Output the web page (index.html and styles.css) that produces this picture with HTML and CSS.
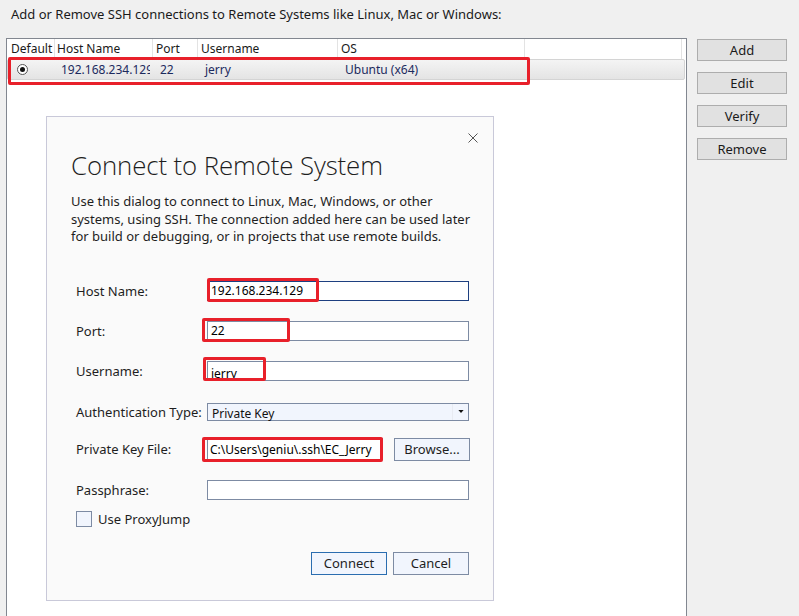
FILE: index.html
```html
<!DOCTYPE html>
<html>
<head>
<meta charset="utf-8">
<link rel="stylesheet" href="styles.css">
</head>
<body>
<div class="intro">Add or Remove SSH connections to Remote Systems like Linux, Mac or Windows:</div>
<div class="workspace">
  <div class="table-panel">
    <div class="thead">
      <div class="th c-default">Default</div>
      <div class="th c-host">Host Name</div>
      <div class="th c-port">Port</div>
      <div class="th c-user">Username</div>
      <div class="th c-os">OS</div>
      <div class="th c-rest"></div>
    </div>
    <div class="trow">
      <div class="td c-default"><span class="radio"><span class="radio-dot"></span></span></div>
      <div class="td c-host"><span class="clip">192.168.234.129</span></div>
      <div class="td c-port">22</div>
      <div class="td c-user">jerry</div>
      <div class="td c-os">Ubuntu (x64)</div>
    </div>
    <div class="mark mark-row"></div>
  </div>
  <div class="side-buttons">
    <button class="side-btn">Add</button>
    <button class="side-btn">Edit</button>
    <button class="side-btn">Verify</button>
    <button class="side-btn">Remove</button>
  </div>
</div>

<div class="dialog">
  <div class="dialog-top">
    <svg class="close" width="10" height="10" viewBox="0 0 10 10"><path d="M0.5 0.5 L9.5 9.5 M9.5 0.5 L0.5 9.5" stroke="#555" stroke-width="1" fill="none"/></svg>
  </div>
  <h1 class="title">Connect to Remote System</h1>
  <p class="desc">Use this dialog to connect to Linux, Mac, Windows, or other systems, using SSH. The connection added here can be used later for build or debugging, or in projects that use remote builds.</p>

  <div class="form">
    <div class="frow r-host">
      <label class="lbl">Host Name:</label>
      <div class="field">
        <div class="input focused">192.168.234.129</div>
        <div class="mark mark-host"></div>
      </div>
    </div>
    <div class="frow r-port">
      <label class="lbl">Port:</label>
      <div class="field">
        <div class="input">22</div>
        <div class="mark mark-port"></div>
      </div>
    </div>
    <div class="frow r-user">
      <label class="lbl">Username:</label>
      <div class="field">
        <div class="input low">jerry</div>
        <div class="mark mark-user"></div>
      </div>
    </div>
    <div class="frow r-auth">
      <label class="lbl">Authentication Type:</label>
      <div class="field">
        <div class="select"><span class="sel-text">Private Key</span><span class="sel-arrow"><svg width="7" height="4" viewBox="0 0 7 4"><path d="M0 0 H7 L3.5 4 Z" fill="#111"/></svg></span></div>
      </div>
    </div>
    <div class="frow r-key">
      <label class="lbl">Private Key File:</label>
      <div class="field field-key">
        <div class="input key">C:\Users\geniu\.ssh\EC_Jerry</div>
        <div class="mark mark-key"></div>
      </div>
      <button class="dbtn browse">Browse...</button>
    </div>
    <div class="frow r-pass">
      <label class="lbl">Passphrase:</label>
      <div class="field">
        <div class="input"></div>
      </div>
    </div>
    <div class="frow r-check">
      <span class="checkbox"></span>
      <span class="check-label">Use ProxyJump</span>
    </div>
    <div class="actions">
      <button class="dbtn primary">Connect</button>
      <button class="dbtn">Cancel</button>
    </div>
  </div>
</div>
</body>
</html>
```

FILE: styles.css
```css
html, body {
  margin: 0;
  padding: 0;
  width: 799px;
  height: 616px;
  overflow: hidden;
  background: #f0f0f0;
  font-family: "Noto Sans", "Liberation Sans", sans-serif;
  color: #1a1a1a;
}

body { position: relative; }

.intro {
  padding: 5px 0 0 11px;
  height: 38px;
  box-sizing: border-box;
  font-size: 13px;
  line-height: 18px;
  color: #1a1a1a;
}

.workspace {
  display: flex;
  align-items: flex-start;
  padding-left: 6px;
}

.table-panel {
  position: relative;
  width: 681px;
  height: 600px;
  box-sizing: border-box;
  border: 1px solid #828790;
  background: #fff;
  font-size: 12px;
}

.thead {
  display: flex;
  height: 20px;
  line-height: 19px;
}

.th {
  box-sizing: border-box;
  padding-left: 4px;
  border-right: 1px solid #e3e3e3;
  color: #1a1a1a;
  white-space: nowrap;
}

.th.c-host { padding-left: 2px; }
.th.c-port, .th.c-user, .th.c-os { padding-left: 3px; }

.c-default { width: 48px; }
.c-host { width: 98px; }
.c-port { width: 45px; }
.c-user { width: 140px; }
.c-os { width: 187px; }
.c-rest { width: 157px; }

.trow {
  display: flex;
  height: 21px;
  box-sizing: border-box;
  margin: 0 1px 0 0;
  border: 1px solid #d4d4d4;
  border-radius: 2px;
  background: linear-gradient(#f4f4f4, #e4e4e4);
  line-height: 19px;
  color: #1c2a5e;
}

.td {
  box-sizing: border-box;
  padding-left: 5px;
  white-space: nowrap;
  overflow: hidden;
}

.trow .c-default { width: 47px; display: flex; align-items: center; padding-left: 9px; }
.trow .c-host { padding-left: 6px; }
.trow .c-port { padding-left: 7px; }
.trow .c-user { padding-left: 7px; }
.trow .c-os { padding-left: 7px; }

.clip { display: block; width: 89px; overflow: hidden; }

.radio {
  width: 11px;
  height: 11px;
  box-sizing: border-box;
  border: 1px solid #555;
  border-radius: 50%;
  background: #fff;
  display: flex;
  align-items: center;
  justify-content: center;
}

.radio-dot {
  width: 5px;
  height: 5px;
  border-radius: 50%;
  background: #111;
}

.mark {
  position: absolute;
  box-sizing: border-box;
  border: 3px solid #e8202a;
  border-radius: 2px;
  pointer-events: none;
}

.mark-row { left: 1px; top: 18px; width: 522px; height: 28px; }

.side-buttons {
  display: flex;
  flex-direction: column;
  gap: 11px;
  margin-left: 10px;
  margin-top: 1px;
}

.side-btn {
  width: 90px;
  height: 22px;
  box-sizing: border-box;
  border: 1px solid #adadad;
  background: #e1e1e1;
  font-family: "Noto Sans", "Liberation Sans", sans-serif;
  font-size: 13px;
  color: #1a1a1a;
  padding: 0;
  line-height: 18px;
}

/* Dialog window */
.dialog {
  position: absolute;
  left: 46px;
  top: 116px;
  width: 448px;
  height: 485px;
  box-sizing: border-box;
  border: 1px solid #c9c9d9;
  background: #fafafa;
  padding: 0 0 0 24px;
}

.dialog-top {
  display: flex;
  justify-content: flex-end;
  padding: 16px 15px 0 0;
  height: 31px;
  box-sizing: border-box;
}

.close { display: block; }

.title {
  margin: 0;
  font-family: "Open Sans", "Noto Sans", sans-serif;
  font-size: 25.8px;
  font-weight: 300;
  line-height: 35px;
  color: #1e1e1e;
  letter-spacing: -0.1px;
}

.desc {
  margin: 10px 0 0 0;
  width: 400px;
  font-size: 13px;
  line-height: 17.5px;
  color: #1e1e1e;
}

.form {
  margin-top: 35px;
  padding-left: 5px;
  font-size: 13px;
  color: #1e1e1e;
}

.frow {
  display: flex;
  align-items: center;
}

.lbl {
  width: 131px;
  flex: none;
}

.field {
  position: relative;
  display: flex;
}

.input {
  width: 262px;
  height: 20px;
  box-sizing: border-box;
  border: 1px solid #7d8ba3;
  background: #fff;
  font-size: 12px;
  line-height: 18px;
  padding-left: 3px;
  color: #000;
  white-space: nowrap;
  overflow: hidden;
}

.input.focused { border-color: #1d3f80; }
.input.low { line-height: 23px; }

.r-host { margin-top: 0; }
.r-port { margin-top: 20px; }
.r-user { margin-top: 20px; }
.r-auth { margin-top: 22px; }
.r-key { margin-top: 17px; }
.r-pass { margin-top: 19px; }
.r-check { margin-top: 11px; height: 16px; }

.select {
  width: 262px;
  height: 18px;
  box-sizing: border-box;
  border: 1px solid #7d8ba3;
  background: #f1f5fd;
  display: flex;
  font-size: 12px;
  line-height: 19px;
}

.sel-text { flex: 1; padding-left: 4px; color: #111; }

.sel-arrow {
  width: 15px;
  border-left: 1px solid #e8ebf2;
  display: flex;
  align-items: center;
  justify-content: center;
}

.sel-arrow svg { width: 6px; height: 3px; }

.input.key {
  width: 176px;
  height: 22px;
  line-height: 21px;
  padding-left: 2px;
}

.dbtn {
  width: 76px;
  height: 23px;
  box-sizing: border-box;
  border: 1px solid #7d8ba3;
  background: #f1f5fd;
  font-family: "Noto Sans", "Liberation Sans", sans-serif;
  font-size: 13px;
  color: #1e1e1e;
  padding: 0;
  line-height: 19px;
}

.browse { margin-left: 11px; height: 23px; }
.primary { border-color: #2a6db0; }

.checkbox {
  width: 16px;
  height: 16px;
  box-sizing: border-box;
  border: 1px solid #7d8ba3;
  background: #f1f5fd;
  margin-right: 6px;
}

.check-label { line-height: 16px; }

.actions {
  display: flex;
  justify-content: flex-end;
  gap: 6px;
  margin-top: 25px;
  padding-right: 24px;
}

.mark-host { left: 0; top: -3px; width: 112px; height: 24px; }
.mark-port { left: -5px; top: -3px; width: 88px; height: 24px; }
.mark-user { left: -4px; top: -4px; width: 63px; height: 24px; }
.mark-key { left: -5px; top: -1px; width: 181px; height: 25px; }
```
